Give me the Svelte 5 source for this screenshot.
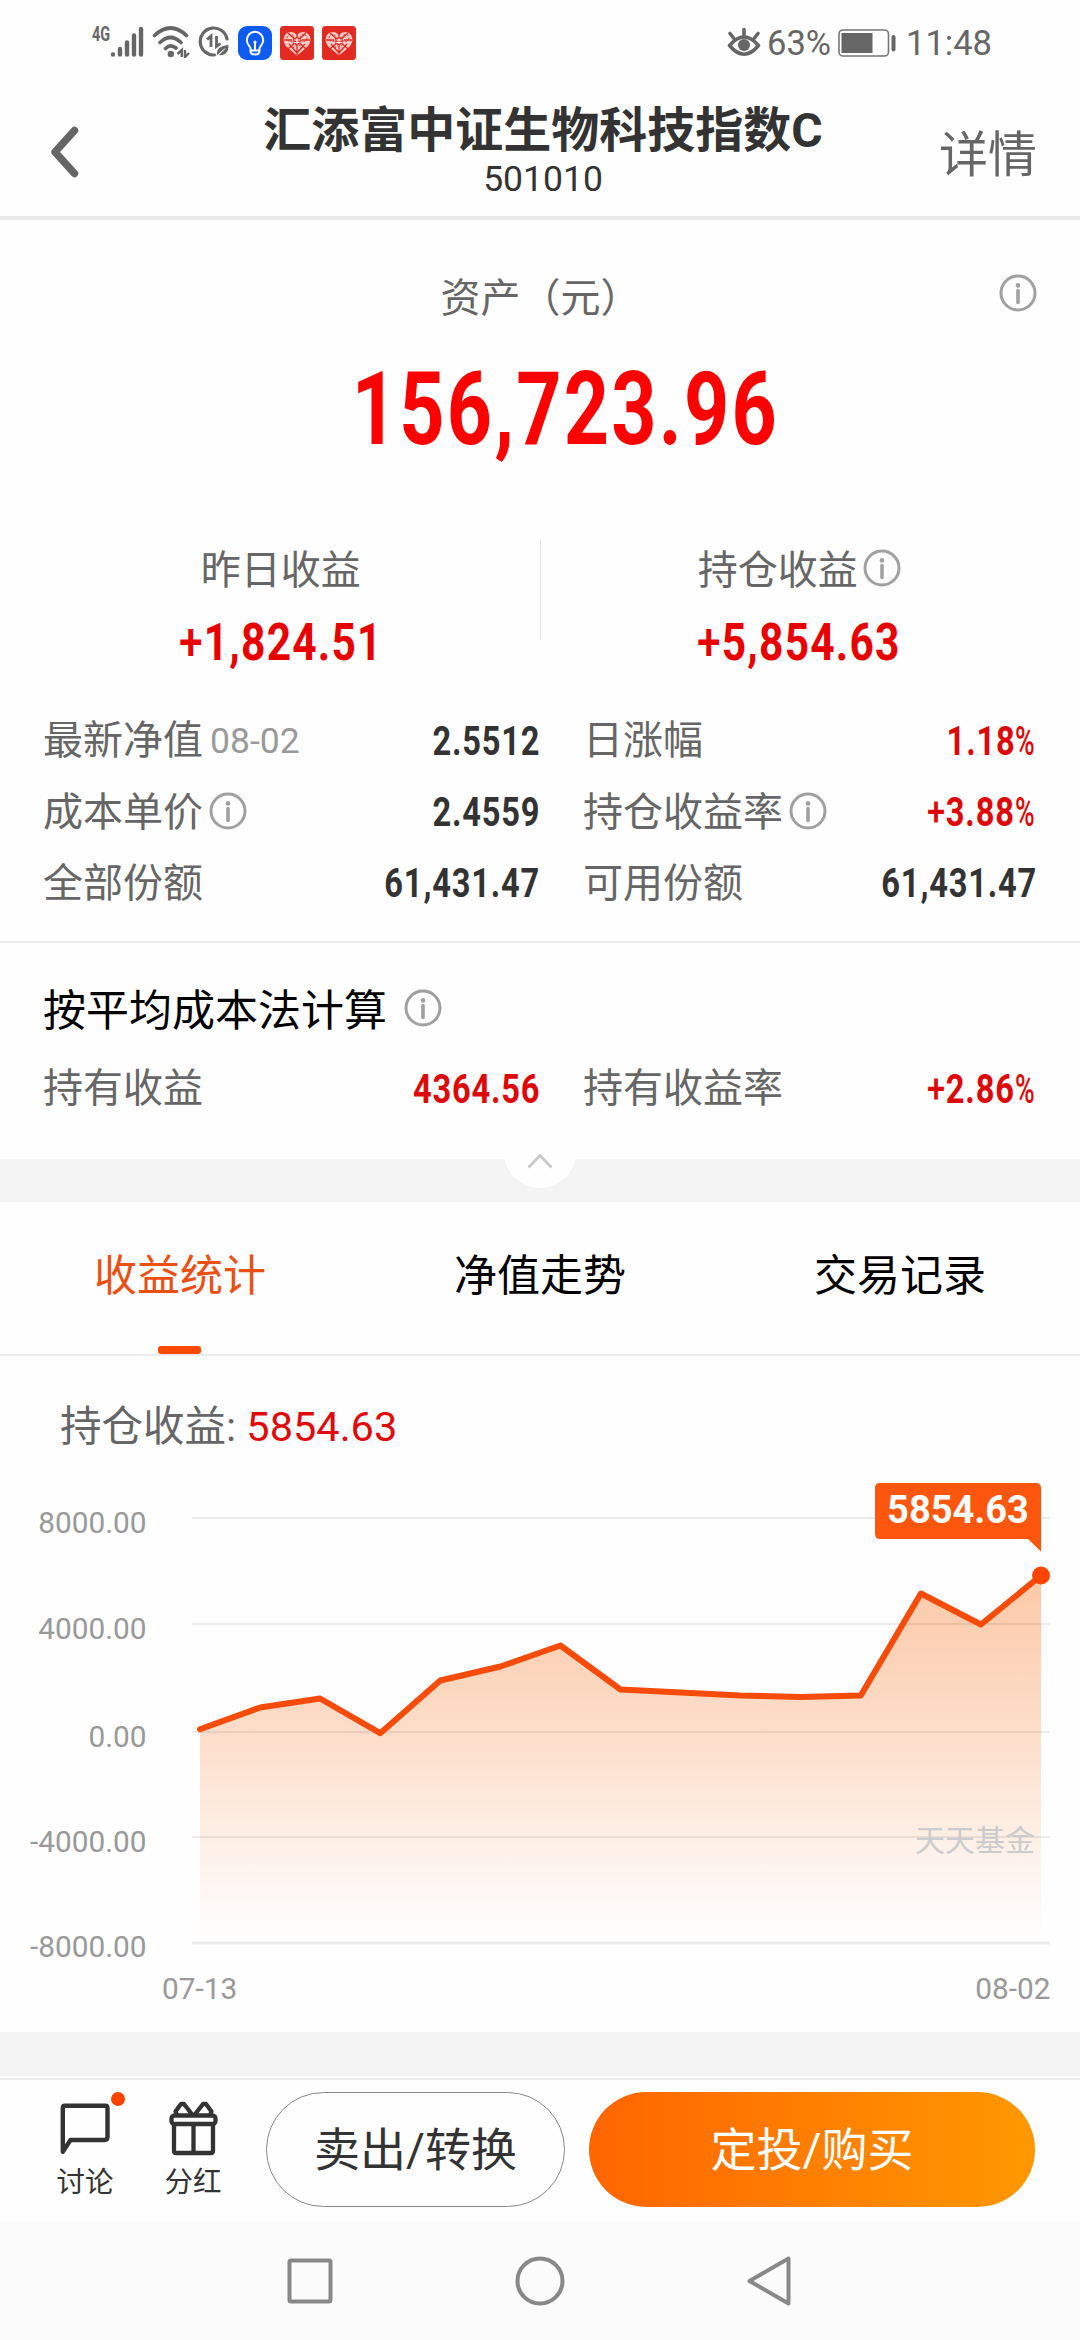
<script>
  const fund = { name: '汇添富中证生物科技指数C', code: '501010' };

  const rows = [
    [
      { label: '最新净值', date: '08-02', value: '2.5512' },
      { label: '日涨幅', value: '1.18', unit: '%', up: true }
    ],
    [
      { label: '成本单价', info: true, value: '2.4559' },
      { label: '持仓收益率', info: true, sign: '+', value: '3.88', unit: '%', up: true }
    ],
    [
      { label: '全部份额', value: '61,431.47' },
      { label: '可用份额', value: '61,431.47' }
    ]
  ];

  const averageRow = [
    { label: '持有收益', value: '4364.56', up: true },
    { label: '持有收益率', sign: '+', value: '2.86', unit: '%', up: true }
  ];

  const tabs = ['收益统计', '净值走势', '交易记录'];
  let activeTab = $state(0);

  // chart
  const left = 200;
  const right = 1041;
  const bottom = 486;
  const history = [68, 885, 1224, -83, 1901, 2428, 3219, 1562, 1450, 1337, 1280, 1337, 5177, 4010, 5854.63];
  const ticks = [
    { label: '8000.00', y: 61 },
    { label: '4000.00', y: 167 },
    { label: '0.00', y: 275 },
    { label: '-4000.00', y: 380 }
  ];

  const points = history.map((v, i) => {
    const x = left + (i * (right - left)) / (history.length - 1);
    const y = 274 - v * 0.02656;
    return [x.toFixed(1), y.toFixed(1)];
  });
  const line = points.map((p) => p.join(',')).join(' ');
  const area = `${left},${bottom} ${line} ${right},${bottom}`;
  const last = points[points.length - 1];
</script>

{#snippet info()}
  <svg class="info" viewBox="0 0 38 38">
    <circle cx="19" cy="19" r="17" fill="none" stroke="#a0a0a0" stroke-width="3" />
    <circle cx="19" cy="11.4" r="2.3" fill="#a0a0a0" />
    <path d="M19 16.5V28.5" stroke="#a0a0a0" stroke-width="3.6" stroke-linecap="round" />
  </svg>
{/snippet}

{#snippet cell(c)}
  <div class="cell">
    <span class="label">{c.label}</span>
    {#if c.date}<span class="date">{c.date}</span>{/if}
    {#if c.info}{@render info()}{/if}
    <span class="value" class:up={c.up}>{#if c.sign}<i>{c.sign}</i>{/if}{c.value}{#if c.unit}<i class="unit">{c.unit}</i>{/if}</span>
  </div>
{/snippet}

{#snippet heart()}
  <svg class="app-icon" viewBox="0 0 34 34">
    <rect width="34" height="34" rx="3.5" fill="#e02a22" />
    <path d="M17 9.5C14 5 8 5 5 9C2 14 4.5 19 8 22L17 29.5L26 22C29.5 19 32 14 29 9C26 5 20 5 17 9.5Z" fill="#f9c9c4" />
    <path d="M17 9V29M8 7L26 23M26 7L8 23M4 14H12M22 14H30M9 18L17 27L25 18" fill="none" stroke="#e02a22" stroke-width="1.3" />
    <g fill="none" stroke="#e02a22" stroke-width="1" stroke-dasharray="2 1.5">
      <circle cx="10.5" cy="12" r="3.5" />
      <circle cx="23.5" cy="12" r="3.5" />
      <circle cx="17" cy="22" r="3.5" />
    </g>
    <circle cx="17" cy="15" r="3.8" fill="#e02a22" />
    <path d="M14.2 14H19.8M14.2 16.5H19.8M17 12.2V18" stroke="#fff" stroke-width="1.1" />
  </svg>
{/snippet}

<div class="screen">
  <div class="status">
    <div class="status-left">
      <span class="net">4G</span>
      <svg class="signal" viewBox="0 0 34 32" stroke="#666" stroke-width="4.4" stroke-linecap="round">
        <path d="M3 28.5V28.6M10 23V28.5M17 16.5V28.5M24 9.5V28.5M31 3V28.5" />
      </svg>
      <svg class="wifi" viewBox="0 0 38 32" fill="none" stroke="#666" stroke-width="3.6" stroke-linecap="round">
        <path d="M2.5 9.5Q18.5 -5.5 34.5 9.5M8 16.5Q18.5 6.5 29 16.5M13.5 22.5Q18.5 17.5 24 22" />
        <circle cx="18.8" cy="28" r="3.2" fill="#666" stroke="none" />
        <path d="M25.5 28L29.8 24V31M33 24V31L37 27" stroke-width="2.4" stroke-linecap="butt" />
      </svg>
      <svg class="saver" viewBox="0 0 32 32" fill="none" stroke="#666">
        <path d="M29 13A13.500 13.500 0 1 0 16.5 29" stroke-width="3.2" stroke-linecap="round" />
        <path d="M9 13.5L13 10V21M18.5 10V20.5L22.5 17.5" stroke-width="2.8" />
        <path d="M18.5 29.5C17.5 22 23 19 31 18.5C31.5 26 27 31 20 29.5L27 22.5" fill="#666" stroke="#fff" stroke-width="1" />
      </svg>
      <svg class="app-icon" viewBox="0 0 34 34" fill="none" stroke="#fff" stroke-width="2">
        <rect width="34" height="34" rx="9" fill="#0d5bf0" stroke="none" />
        <path d="M12.5 25V22.5C12.5 20.5 8.800 19 8.800 14A8.200 8.200 0 0 1 25.200 14C25.200 19 21.5 20.5 21.5 22.5V25Q21.5 28.5 17 28.5Q12.5 28.5 12.5 25ZM12.5 24.5H21.5M17 24V17" />
        <circle cx="17" cy="16" r="1.600" fill="#fff" stroke="none" />
      </svg>
      {@render heart()}
      {@render heart()}
    </div>
    <div class="status-right">
      <svg class="eye" viewBox="0 0 34 30" fill="none" stroke="#666" stroke-width="3.6" stroke-linecap="round">
        <path d="M2.500 18.500Q17 1.500 31.500 18.500Q17 36 2.500 18.500ZM17 2.500V8M3 6.500L6.500 11M31 6.500L27.500 11" stroke-linejoin="round" />
        <circle cx="17" cy="18" r="6" fill="#666" stroke="none" />
      </svg>
      <span class="percent">63%</span>
      <svg class="battery" viewBox="0 0 58 28">
        <rect x="1" y="1" width="49.500" height="26" rx="4" fill="none" stroke="#777" stroke-width="1.600" />
        <rect x="3.500" y="4" width="31" height="20" fill="#666" />
        <rect x="53.500" y="6" width="4" height="16.500" rx="2" fill="#666" />
      </svg>
      <span class="clock">11:48</span>
    </div>
  </div>

  <header>
    <svg class="back" viewBox="0 0 30 52">
      <path d="M25.500 4.500L6 26L25.500 47.500" fill="none" stroke="#666" stroke-width="7.500" stroke-linecap="round" stroke-linejoin="round" />
    </svg>
    <div class="heading">
      <h1>{fund.name}</h1>
      <p>{fund.code}</p>
    </div>
    <span class="detail">详情</span>
  </header>

  <section class="assets">
    <div class="assets-title">
      <span>资产（元）</span>
      {@render info()}
    </div>
    <div class="total"><span>156,723.96</span></div>

    <div class="yields">
      <div class="yield">
        <div class="yield-label">昨日收益</div>
        <div class="yield-value"><span><i>+</i>1,824.51</span></div>
      </div>
      <div class="divider"></div>
      <div class="yield">
        <div class="yield-label">持仓收益{@render info()}</div>
        <div class="yield-value"><span><i>+</i>5,854.63</span></div>
      </div>
    </div>

    <div class="table">
      {#each rows as row}
        <div class="row">
          {#each row as c}{@render cell(c)}{/each}
        </div>
      {/each}
    </div>
  </section>

  <section class="average">
    <h2>按平均成本法计算 {@render info()}</h2>
    <div class="row">
      {#each averageRow as c}{@render cell(c)}{/each}
    </div>
  </section>

  <div class="band fold">
    <div class="knob">
      <svg viewBox="0 0 26 16">
        <path d="M1.5 14.5L13 2.5L24.5 14.5" fill="none" stroke="#c8c8c8" stroke-width="2.6" />
      </svg>
    </div>
  </div>

  <nav class="tabs">
    {#each tabs as tab, i}
      <button class="tab" class:active={activeTab === i} onclick={() => (activeTab = i)}>{tab}</button>
    {/each}
  </nav>

  <section class="stats">
    <div class="legend">持仓收益: <b>5854.63</b></div>
    <svg class="chart" viewBox="0 0 1080 575">
      <defs>
        <linearGradient id="fill" x1="0" y1="0" x2="0" y2="1">
          <stop offset="0" stop-color="#f98134" stop-opacity="0.43" />
          <stop offset="0.5" stop-color="#f98134" stop-opacity="0.23" />
          <stop offset="1" stop-color="#f9a060" stop-opacity="0" />
        </linearGradient>
      </defs>
      <polygon points={area} fill="url(#fill)" />
      {#each ticks as t}
        <path d="M192 {t.y}H1050" stroke="#000" stroke-opacity="0.1" stroke-width="1.6" />
        <text class="axis" x="146.500" y={t.y + 15} text-anchor="end">{t.label}</text>
      {/each}
      <path d="M192 486H1050" stroke="#ebebeb" stroke-width="3" />
      <text class="axis" x="146.500" y="500" text-anchor="end">-8000.00</text>
      <text class="axis" x="162" y="542">07-13</text>
      <text class="axis" x="1050.500" y="542" text-anchor="end">08-02</text>
      <text class="watermark" x="1035" y="394" text-anchor="end">天天基金</text>

      <polyline points={line} fill="none" stroke="#f74b0a" stroke-width="6" stroke-linejoin="round" stroke-linecap="round" />
      <circle cx={last[0]} cy={last[1]} r="9" fill="#ff4400" />
      <path d="M880 26H1036Q1041 26 1041 31V94.500L1028 82H880Q875 82 875 77V31Q875 26 880 26Z" fill="#ff560d" />
      <text class="tip" x="958" y="65.500" text-anchor="middle">5854.63</text>
    </svg>
  </section>

  <div class="band"></div>

  <footer>
    <div class="action">
      <svg viewBox="0 0 54 56" fill="none" stroke="#333" stroke-width="4.4" stroke-linejoin="round">
        <path d="M4.800 50.800V7Q4.800 4.800 7 4.800H47Q49.500 4.800 49.500 7V36Q49.500 39 46.500 39H12.500L4.800 50.800Z" />
      </svg>
      <span class="dot"></span>
      <span>讨论</span>
    </div>
    <div class="action">
      <svg viewBox="0 0 54 56" fill="none" stroke="#333" stroke-width="4.3" stroke-linejoin="round">
        <path d="M8 24V50Q8 52 10 52H45Q47 52 47 50V24M27.500 24V52" />
        <rect x="5.500" y="14.500" width="44" height="8.500" rx="3" />
        <path d="M11 14L9.500 10.500L15 3L18 3L26.500 14M44 14L45.500 10.500L40 3L37 3L28.500 14" />
      </svg>
      <span>分红</span>
    </div>
    <button class="sell">卖出/转换</button>
    <button class="buy">定投/购买</button>
  </footer>

  <div class="system-nav">
    <svg viewBox="0 0 52 52"><rect x="5.500" y="5.500" width="41" height="41" rx="1.500" /></svg>
    <svg viewBox="0 0 52 52"><circle cx="26" cy="26" r="22.500" /></svg>
    <svg viewBox="0 0 52 52"><path d="M44.500 3.500V48.500L5.500 26Z" /></svg>
  </div>
</div>

<style>
  :global(body) {
    background: #fff;
  }

  .screen {
    width: 1080px;
    height: 2340px;
    overflow: hidden;
    display: flex;
    flex-direction: column;
    background: #fefefe;
    color: #666;
    font-family: Roboto, "Noto Sans CJK SC", sans-serif;
    font-size: 40px;
  }

  h1, h2, p {
    margin: 0;
    font-weight: 400;
  }

  i {
    font-style: normal;
    font-weight: 500;
  }

  button {
    border: none;
    padding: 0;
    background: none;
    font: inherit;
    cursor: pointer;
  }

  .info {
    width: 38px;
    height: 38px;
    flex: none;
  }

  /* status bar */
  .status {
    height: 80px;
    display: flex;
    justify-content: space-between;
    padding: 0 90px 0 92px;
    font-size: 34.5px;
    line-height: 87px;
  }

  .status-left,
  .status-right {
    display: flex;
  }

  .status-left svg {
    margin-top: 26px;
  }

  .net {
    width: 18px;
    font-size: 20px;
    font-weight: 700;
    line-height: 68px;
    transform: scaleX(0.72);
    transform-origin: left;
  }

  .signal {
    width: 34px;
    height: 32px;
  }

  .wifi {
    width: 38px;
    height: 32px;
    margin-left: 8px;
  }

  .saver {
    width: 32px;
    height: 32px;
    margin-left: 8px;
  }

  .app-icon {
    width: 34px;
    height: 34px;
    margin-left: 8px;
  }

  .eye {
    width: 34px;
    height: 30px;
    margin: 27px 6px 0 0;
  }

  .percent {
    width: 71px;
  }

  .battery {
    width: 58px;
    height: 28px;
    margin-top: 29px;
  }

  .clock {
    width: 84px;
    margin-left: 10px;
  }

  /* header */
  header {
    height: 136px;
    border-bottom: 4px solid #ebebeb;
    display: grid;
    grid-template-columns: 1fr auto 1fr;
    padding: 0 43px 0 49px;
  }

  .back {
    width: 30px;
    height: 52px;
    margin-top: 46px;
  }

  .heading {
    padding-top: 23px;
    text-align: center;
    color: #333;
  }

  h1 {
    font-size: 48px;
    font-weight: 700;
    line-height: 56px;
  }

  .heading p {
    font-size: 35.5px;
    line-height: 40px;
  }

  .detail {
    font-size: 49px;
    line-height: 151px;
    text-align: right;
  }

  /* assets */
  .assets {
    height: 671px;
    padding-top: 50px;
    border-bottom: 2px solid #ebebeb;
  }

  .assets-title {
    display: grid;
    grid-template-columns: 1fr auto 1fr;
    padding: 0 43px 0 44px;
    line-height: 57px;
    height: 58px;
  }

  .assets-title span {
    grid-column: 2;
  }

  .assets-title .info {
    justify-self: end;
    margin-top: 4px;
  }

  .total {
    margin-top: 21px;
    padding-left: 50px;
    text-align: center;
    color: #f00;
    font-size: 102px;
    font-weight: 700;
    line-height: 120px;
  }

  .total span {
    display: inline-block;
    letter-spacing: 3px;
    transform: scaleX(0.773);
  }

  .yields {
    margin-top: 71px;
    padding: 0 22px;
    display: flex;
    height: 132px;
  }

  .yield {
    flex: 1;
    padding-top: 4px;
  }

  .divider {
    width: 1px;
    height: 100px;
    background: #e4e4e4;
  }

  .yield-label {
    display: flex;
    justify-content: center;
    align-items: center;
    gap: 5px;
    height: 52px;
    line-height: 51px;
  }

  .yield-label .info {
    margin-top: -4px;
  }

  .yield-value {
    margin-top: 16px;
    text-align: center;
    font-size: 52.5px;
    font-weight: 700;
    line-height: 61px;
    color: #e80000;
  }

  .yield-value span {
    display: inline-block;
    letter-spacing: 1.5px;
    transform: scaleX(0.81);
  }

  .table {
    margin-top: 34px;
  }

  .row {
    display: flex;
    padding: 0 43px;
    height: 71.4px;
    line-height: 70.5px;
  }

  .cell {
    width: 497px;
    display: flex;
    align-items: center;
  }

  .cell + .cell {
    width: auto;
    flex: 1;
    margin-left: 43px;
  }

  .cell .info {
    margin: -4px 0 0 6px;
  }

  .date {
    margin-left: 7px;
    font-size: 35.5px;
    color: #999;
  }

  .value {
    margin-left: auto;
    color: #333;
    font-weight: 700;
    letter-spacing: 1px;
    line-height: 72px;
    transform: scaleX(0.815);
    transform-origin: right;
  }

  .value.up {
    color: #dd0808;
  }

  .unit {
    display: inline-block;
    width: 27px;
    transform: scaleX(0.82);
    transform-origin: left;
  }

  /* average cost */
  .average {
    height: 178px;
    padding-top: 38px;
  }

  h2 {
    display: flex;
    align-items: center;
    gap: 17px;
    padding-left: 43px;
    margin-bottom: 13px;
    font-size: 43px;
    line-height: 60px;
    color: #000;
  }

  h2 .info {
    margin-top: -6px;
  }

  .band {
    height: 44px;
    background: #f4f4f4;
  }

  .fold {
    position: relative;
    height: 43px;
  }

  .knob {
    position: absolute;
    left: 504px;
    top: -43px;
    width: 72px;
    height: 72px;
    border-radius: 50%;
    background: #fefefe;
    display: flex;
    justify-content: center;
  }

  .knob svg {
    width: 26px;
    height: 16px;
    margin-top: 37px;
  }

  /* tabs */
  .tabs {
    height: 152px;
    display: flex;
    border-bottom: 2px solid #ececec;
  }

  .tab {
    flex: 1;
    position: relative;
    padding-bottom: 12px;
    font-size: 43px;
    color: #000;
  }

  .tab.active {
    color: #ea5014;
  }

  .tab.active::after {
    content: "";
    position: absolute;
    left: 158px;
    bottom: 0;
    width: 43px;
    height: 8px;
    border-radius: 3px;
    background: #fc4a03;
  }

  /* chart */
  .stats {
    height: 676px;
  }

  .legend {
    padding: 41px 0 0 60px;
    font-size: 41.5px;
    line-height: 60px;
  }

  .legend b {
    font-weight: 400;
    color: #e00a0a;
  }

  .chart {
    display: block;
    width: 1080px;
    height: 575px;
  }

  .axis {
    font-size: 29.8px;
    fill: #999;
  }

  .watermark {
    font-size: 30px;
    fill: #ccc;
  }

  .tip {
    font-size: 38px;
    font-weight: 700;
    fill: #fff;
  }

  /* bottom bar */
  footer {
    height: 130px;
    margin-top: 2px;
    border-top: 2px solid #ececec;
    padding: 12px 44px 0 31px;
    display: flex;
    color: #333;
  }

  .action {
    position: relative;
    width: 108px;
    display: flex;
    flex-direction: column;
    align-items: center;
    font-size: 28.5px;
    line-height: 40px;
  }

  .action svg {
    width: 54px;
    height: 56px;
    margin: 9px 0 6px;
  }

  .dot {
    position: absolute;
    left: 80px;
    top: 0;
    width: 14px;
    height: 14px;
    border-radius: 50%;
    background: #ff4400;
  }

  .sell,
  .buy {
    height: 115px;
    border-radius: 58px;
    padding-bottom: 8px;
    font-size: 46px;
  }

  .sell {
    width: 299px;
    margin-left: 19px;
    border: 1.5px solid #888;
    color: #333;
  }

  .buy {
    width: 446px;
    margin-left: 24px;
    color: #fff;
    background: linear-gradient(90deg, #ff6500, #ff9800);
  }

  .system-nav {
    height: 118px;
    display: flex;
    justify-content: center;
    align-items: center;
    gap: 178px;
    background: #fbfbfb;
  }

  .system-nav svg {
    width: 52px;
    height: 52px;
    fill: none;
    stroke: #888;
    stroke-width: 4;
    stroke-linejoin: round;
  }
</style>
